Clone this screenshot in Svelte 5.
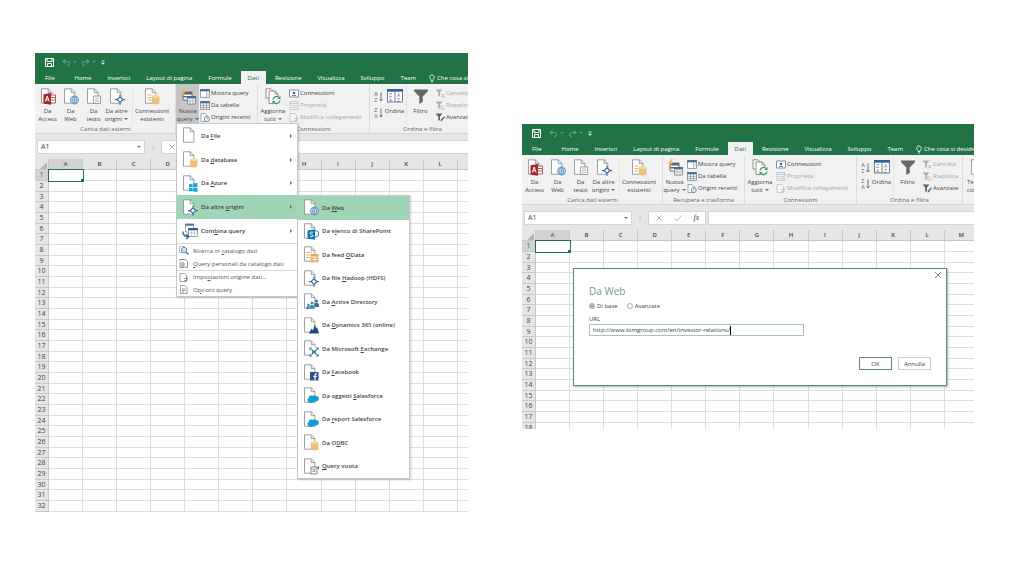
<script>
  const tabs = ['File', 'Home', 'Inserisci', 'Layout di pagina', 'Formule', 'Dati', 'Revisione', 'Visualizza', 'Sviluppo', 'Team'];
  const columns = 'ABCDEFGHIJKLM'.split('');
  const importButtons = [
    { icon: 'access', lines: ['Da', 'Access'] },
    { icon: 'web', lines: ['Da', 'Web'] },
    { icon: 'text', lines: ['Da', 'testo'] },
    { icon: 'diamond', lines: ['Da altre', 'origini'], more: true }
  ];
  // Each label is split as [before, access key, after].
  const queryMenu = [
    { icon: 'page', label: ['Da ', 'F', 'ile'] },
    { icon: 'database', label: ['Da ', 'd', 'atabase'] },
    { icon: 'azure', label: ['Da ', 'A', 'zure'] },
    { icon: 'diamond', label: ['Da altre ', 'o', 'rigini'], active: true },
    { icon: 'combine', label: ['Com', 'b', 'ina query'] }
  ];
  const queryTools = [
    { icon: 'search', label: ['Ricerca in ', 'c', 'atalogo dati'] },
    { icon: 'personal', label: ['', 'Q', 'uery personali da catalogo dati'] },
    { icon: 'settings', label: ['Impo', 's', 'tazioni origine dati...'], divided: true },
    { icon: 'options', label: ['O', 'p', 'zioni query'] }
  ];
  const sourceMenu = [
    { icon: 'web', label: ['Da ', 'W', 'eb'], active: true },
    { icon: 'sharepoint', label: ['Da e', 'l', 'enco di SharePoint'] },
    { icon: 'odata', label: ['Da feed ', 'O', 'Data'] },
    { icon: 'diamond', label: ['Da file ', 'H', 'adoop (HDFS)'] },
    { icon: 'people', label: ['Da ', 'A', 'ctive Directory'] },
    { icon: 'dynamics', label: ['Da ', 'D', 'ynamics 365 (online)'] },
    { icon: 'exchange', label: ['Da Microsoft ', 'E', 'xchange'] },
    { icon: 'facebook', label: ['Da ', 'F', 'acebook'] },
    { icon: 'cloud', label: ['Da oggetti ', 'S', 'alesforce'] },
    { icon: 'cloud', label: ['Da ', 'r', 'eport Salesforce'] },
    { icon: 'database', label: ['Da O', 'D', 'BC'] },
    { icon: 'blank', label: ['', 'Q', 'uery vuota'] }
  ];
  let mode = $state('base');
  let url = $state('http://www.ktmgroup.com/en/investor-relations/');
</script>

{#snippet docIcon(kind)}
  <svg class="doc" viewBox="0 0 16 17" aria-hidden="true">
    {#if kind === 'combine'}
      <path d="M3.5 1h8v8h-8z" fill="#fff" stroke="#8a9299" stroke-width=".8" />
      <path d="M3.2.8h8.6v2H3.2z" fill="#5b7795" />
      <path d="M6.5 5.5h9v8h-9z" fill="#fff" stroke="#7f8a94" stroke-width=".8" />
      <path d="M6.2 5h9.6v2.3H6.2z" fill="#2c5f94" />
      <path d="M6.5 10h9M9.5 7v6.5M12.5 7v6.5" stroke="#a9b3bd" stroke-width=".6" />
      <path d="M1 8.5c0 3.5 1.5 5 5 5M4.2 11l2.6 2.5L4.2 16" fill="none" stroke="#2d6fae" stroke-width="1.5" />
    {:else if kind === 'query'}
      <path d="M3 4h9v8H3z" fill="#fff" stroke="#666" stroke-width=".9" />
      <path d="M3 4h9v2.5H3zM3 8h9v1.5H3z" fill="#666" />
      <path d="M7.5 8.5h8v7.5h-8z" fill="#fff" stroke="#777" stroke-width=".8" />
      <path d="M7.2 8h8.6v2.4H7.2z" fill="#3f6c9b" />
      <path d="M7.5 13h8M10 10v6M13 10v6" stroke="#8b9299" stroke-width=".6" />
      <path d="M4.5 0 1 4.5h2.2L1.5 8 6 3.5H3.8L6 0z" fill="#e9b66a" />
    {:else if kind === 'refresh'}
      <path d="M1 .8h5l2 2V10H1z" fill="#fff" stroke="#777" stroke-width=".8" />
      <path d="M4 3h6l3 3v9.5H4z" fill="#fff" stroke="#777" stroke-width=".8" />
      <path d="M10 3v3h3" fill="none" stroke="#777" stroke-width=".7" />
      <circle cx="11.5" cy="12" r="4.5" fill="#f4f4f4" />
      <path d="M8 11.5a3.6 3.6 0 0 1 6.3-1.8M15 12.5a3.6 3.6 0 0 1-6.3 1.8" fill="none" stroke="#3c9a62" stroke-width="1.3" />
      <path d="M15.5 7.8v3.1h-3.1zM7.5 16.2v-3.1h3.1z" fill="#3c9a62" />
    {:else}
      <path d="M1.5.8h6.8l3.6 3.7v10.7H1.5z" fill="#fff" stroke="#84898d" stroke-width=".8" />
      <path d="M8.2.8v3.8h3.7" fill="none" stroke="#84898d" stroke-width=".8" />
      {#if kind === 'access'}
        <path d="M9.5 7h6v8h-6z" fill="#fff" stroke="#a33a3d" stroke-width=".8" />
        <path d="M10 9.5h5M10 12h5" stroke="#a33a3d" stroke-width=".8" />
        <path d="M3.5 6.2 11 5v11.8l-7.500-1.200z" fill="#a4262c" />
        <path d="m5.300 13.500 1.900-5.500 1.900 5.500M6 11.800h2.500" fill="none" stroke="#fff" stroke-width="1" />
      {:else if kind === 'web'}
        <circle cx="11.500" cy="12" r="4" fill="#e9f2fa" stroke="#4d87b8" stroke-width=".8" />
        <path d="M7.500 12h8M11.500 8v8M8.500 9.800h6M8.500 14.200h6" stroke="#4d87b8" stroke-width=".6" />
        <ellipse cx="11.500" cy="12" rx="2" ry="4" fill="none" stroke="#4d87b8" stroke-width=".6" />
      {:else if kind === 'text'}
        <path d="M7.500 8h7v7.500h-7z" fill="#fff" stroke="#84898d" stroke-width=".8" />
        <path d="M9 10h4M9 11.800h4M9 13.600h4" stroke="#999" stroke-width=".6" />
      {:else if kind === 'diamond'}
        <path d="m11 7.500 4 4-4 4-4-4z" fill="#fff" />
        <path d="m11 8.800 2.800 2.800-2.800 2.800-2.800-2.800z" fill="#fff" stroke="#3b6e9c" stroke-width="1.300" />
        <path d="M11 6.500v2M11 14.700v2M6 11.600h2M14 11.600h2" stroke="#3b6e9c" stroke-width="1.200" />
      {:else if kind === 'database' || kind === 'connections'}
        {#if kind === 'connections'}
          <path d="M3.500 7h4M3.500 9.500h4M3.500 12h4" stroke="#df9a45" stroke-width=".8" />
        {/if}
        <path d="M8 8.500v6.300c0 1 1.700 1.700 3.700 1.700s3.700-.7 3.700-1.700V8.500z" fill="#eec076" />
        <ellipse cx="11.700" cy="8.500" rx="3.700" ry="1.500" fill="#f6d59f" />
      {:else if kind === 'azure'}
        <path d="m7 9.200 3.600-.5v3.600H7zM11.200 8.600l4.300-.6v4.300h-4.300zM7 12.900h3.600v3.500L7 15.900zM11.200 12.900h4.300v4.100l-4.300-.6z" fill="#19a7e0" />
      {:else if kind === 'sharepoint'}
        <circle cx="12.500" cy="11" r="3.200" fill="#fff" stroke="#2b7cb8" stroke-width="1" />
        <path d="m4.500 7.500 7.500-1.300v10.600l-7.500-1.300z" fill="#1173b6" />
        <path d="M10 9.500c-1-.8-3-.5-3 .6 0 1.500 3 1 3 2.500 0 1.200-2 1.400-3.100.6" fill="none" stroke="#fff" stroke-width="1" />
      {:else if kind === 'odata'}
        <path d="M3 6.500h6M3 9h4M3 11.500h4" stroke="#e3a05a" stroke-width=".8" />
        <path d="M7.500 8h8v8.300h-8z" fill="#e9a45f" />
        <path d="M7.500 11h8M8.500 13.500h6M12 11v5" stroke="#fff" stroke-width=".8" />
      {:else if kind === 'people'}
        <circle cx="9" cy="10" r="1.500" fill="#3f8a86" /><circle cx="13.500" cy="8" r="1.600" fill="#35719f" />
        <path d="M11 14v-2.500c0-1 1-1.500 2.500-1.500s2.500.5 2.500 1.500V14z" fill="#35719f" />
        <path d="M6.300 16v-2.500c0-1 1-1.700 2.700-1.700s2.700.7 2.700 1.700V16z" fill="#3f8a86" stroke="#fff" stroke-width=".4" />
        <circle cx="5.500" cy="12" r="1.200" fill="#35719f" /><path d="M3.500 16v-1.500c0-.9.800-1.300 2-1.300l1 2.800z" fill="#35719f" />
      {:else if kind === 'dynamics'}
        <path d="m6 16.500 2.500-5 1.500 2 1.700-6 1.600 4 .7-1.500 2 6.500z" fill="#174a80" />
      {:else if kind === 'exchange'}
        <path d="M6.500 7.500h9v9h-9z" fill="#fff" />
        <path d="M7 10V8h2M13 8h2v2M15 14v2h-2M9 16H7v-2M8.500 9.500l5 5M13.500 9.500l-5 5M9 12h4" fill="none" stroke="#277ca8" stroke-width="1.200" />
      {:else if kind === 'facebook'}
        <path d="M7 8h8.500v8.500H7z" fill="#304f8f" />
        <path d="M14 9.800h-.8q-1.200 0-1.200 1.300v5.400M10.300 12.500h3.500" fill="none" stroke="#fff" stroke-width="1.200" />
      {:else if kind === 'cloud'}
        <path d="M5.500 14.700c-1.500-.8-1.400-3 .2-3.600-.2-2 2-3.200 3.500-2 1-1.300 2.700-1.100 3.300 0 1.800-.5 3.300.8 3.300 2.600s-1.600 3-3.200 2.600c-.8 1.200-2.200 1.400-3 .6-1.200 1.300-3.500 1-4.100-.2z" fill="#119cd8" />
      {:else if kind === 'blank'}
        <path d="M8 9h6v7H8z" fill="#fff" stroke="#777" stroke-width=".9" />
        <path d="M9.500 11.200h3M9.500 13.200h3M15.500 8v3M14 9.500h2" stroke="#666" stroke-width=".9" />
      {/if}
    {/if}
  </svg>
{/snippet}

{#snippet smallIcon(kind, muted = false)}
  <svg class="mini" class:muted viewBox="0 0 10 9" aria-hidden="true">
    {#if kind === 'show' || kind === 'table'}
      <path d="M.5.6h9v7.800h-9z" fill="#fff" stroke="#6d7780" stroke-width=".7" />
      <path d="M.2.200h9.600v2.100H.2z" fill="#3f6c9b" />
      {#if kind === 'table'}
        <path d="M.5 4.300h9M.5 6.300h9M3.500 2v6.500M6.500 2v6.500" stroke="#6d7780" stroke-width=".6" />
      {:else}
        <path d="M6.500 2v6.500M7.300 4h1.500M7.300 6h1.500" stroke="#7a9ab8" stroke-width=".6" />
      {/if}
    {:else if kind === 'recent'}
      <path d="M1 .5h4l2 2v6H1z" fill="#fff" stroke="#7b8085" stroke-width=".7" />
      <circle cx="6.800" cy="6" r="2.500" fill="#fff" stroke="#44759f" stroke-width=".8" />
      <path d="M6.800 4.500V6h1.300" fill="none" stroke="#44759f" stroke-width=".6" />
    {:else if kind === 'connect'}
      <path d="M.5 1h9v7h-9z" fill="#fff" stroke="#6d7780" stroke-width=".8" />
      <circle cx="5" cy="4" r="1.300" fill="#2f6a9d" /><path d="M3 6.500h4" stroke="#2f6a9d" stroke-width=".8" />
    {:else if kind === 'props'}
      <path d="M1 .5h8v8H1zM1 2.500h8M2.500 4.500h1M4.500 4.500H8M2.500 6.500h1M4.500 6.500H8" fill="none" stroke="#777" stroke-width=".7" />
    {:else if kind === 'edit' || kind === 'settings'}
      <path d="M1 .5h4.500l2 2v6H1z" fill="#fff" stroke="#777" stroke-width=".7" />
      <path d="M5 5.500h3.500M5 7.500h3.500M7.500 4.500l1.500 1-1.500 1" fill="none" stroke="#557da0" stroke-width=".7" />
    {:else if kind === 'clear' || kind === 'again' || kind === 'advanced'}
      <path d="M.5.500h7L5 3.500V7L3.200 8V3.500z" fill="#5f6469" />
      {#if kind === 'clear'}
        <path d="m6 5 3.500 3.500M9.500 5 6 8.500" stroke="#777" stroke-width="1" />
      {:else if kind === 'again'}
        <path d="M9.200 6.500a1.800 1.800 0 1 1-1-1.500" fill="none" stroke="#777" stroke-width=".9" />
      {:else}
        <path d="m5.500 8.500.5-2 3.200-3.300.8.800L6.800 8z" fill="#2f6a9d" />
      {/if}
    {:else if kind === 'search'}
      <path d="M.5.500h5v6h-5z" fill="#fff" stroke="#8a9096" stroke-width=".6" />
      <circle cx="5" cy="4" r="2.600" fill="#fff" stroke="#3c6f9e" stroke-width=".9" />
      <path d="m7 6 2.300 2.500" stroke="#3c6f9e" stroke-width="1.200" /><path d="M3.800 4h2.500" stroke="#3c6f9e" stroke-width=".7" />
    {:else if kind === 'personal'}
      <path d="M1 2.500v-2h5.500l2 2v6H6" fill="none" stroke="#777" stroke-width=".8" />
      <path d="M1 4h4v4.500H1zM2.500 5.500v2M3.800 5v2.500" fill="#fff" stroke="#666" stroke-width=".7" />
    {:else if kind === 'options'}
      <path d="M1.500.500h4.500l2 2v6H1.500zM3 4h3.500M3 5.500h3.500M3 7h2" fill="#fff" stroke="#777" stroke-width=".7" />
    {/if}
  </svg>
{/snippet}

{#snippet bigButton(icon, lines, more = false, pressed = false)}
  <button class="big" class:pressed>
    {@render docIcon(icon)}
    <span>{lines[0]}</span>
    <span>{lines[1]}{#if more}<i class="caret"></i>{/if}</span>
  </button>
{/snippet}

{#snippet smallButton(icon, label, off = false)}
  <button class="small" disabled={off}>{@render smallIcon(icon, off)}{label}</button>
{/snippet}

{#snippet excel(rows, menuOpen, overlay)}
  <section class="window" aria-label="Cartella di lavoro">
    <header>
      <div class="quick">
        <button aria-label="Salva">
          <svg viewBox="0 0 9 9"><path d="M.5.500h8v8h-8zM2 .5v3h5v-3M2.500 8.500V5.500h4v3" fill="none" stroke="#fff" /></svg>
        </button>
        <button class="dim" aria-label="Annulla azione">
          <svg viewBox="0 0 9 9"><path d="M3.500 1 1 3.500 3.500 6M1 3.500h4.500a2 2 0 0 1 0 4H5" fill="none" stroke="#fff" /></svg><i class="caret"></i>
        </button>
        <button class="dim" aria-label="Ripeti azione">
          <svg viewBox="0 0 9 9"><path d="M5.500 1 8 3.500 5.500 6M8 3.500H3.500a2 2 0 0 0 0 4H4" fill="none" stroke="#fff" /></svg><i class="caret"></i>
        </button>
        <button aria-label="Personalizza">
          <svg viewBox="0 0 9 9"><path d="M1.500 3h3" stroke="#fff" stroke-width=".8" /><path d="M1.200 4.700h3.600L3 6.700z" fill="#fff" /></svg>
        </button>
      </div>
      <nav>
        {#each tabs as tab}
          <button class="tab" class:current={tab === 'Dati'}>{tab}</button>
        {/each}
        <button class="tab tell">
          <svg viewBox="0 0 6 9" aria-hidden="true"><path d="M2 6.500V5.300a2.300 2.300 0 1 1 2 0v1.200zM2 8h2" fill="none" stroke="#fff" stroke-width=".8" /></svg>Che cosa si desidera fare?
        </button>
      </nav>
    </header>

    <div class="ribbon">
      <div class="group import">
        <div class="tools">
          {#each importButtons as b}
            {@render bigButton(b.icon, b.lines, b.more)}
          {/each}
          <div class="wide">{@render bigButton('connections', ['Connessioni', 'esistenti'])}</div>
        </div>
        <p>Carica dati esterni</p>
      </div>
      <div class="group transform">
        <div class="tools">
          {@render bigButton('query', ['Nuova', 'query'], true, menuOpen)}
          <div class="stack">
            {@render smallButton('show', 'Mostra query')}
            {@render smallButton('table', 'Da tabella')}
            {@render smallButton('recent', 'Origini recenti')}
          </div>
        </div>
        <p>Recupera e trasforma</p>
      </div>
      <div class="group links">
        <div class="tools">
          {@render bigButton('refresh', ['Aggiorna', 'tutti'], true)}
          <div class="stack">
            {@render smallButton('connect', 'Connessioni')}
            {@render smallButton('props', 'Proprietà', true)}
            {@render smallButton('edit', 'Modifica collegamenti', true)}
          </div>
        </div>
        <p>Connessioni</p>
      </div>
      <div class="group sorting">
        <div class="tools">
          <div class="az">
            {#each [['A', 'Z'], ['Z', 'A']] as pair}
              <button aria-label={pair.join(' ')}>
                <svg viewBox="0 0 9 12"><text x="0" y="5" font-size="6" fill="#2f6a9d">{pair[0]}</text><text x="0" y="11" font-size="6" fill="#7d5a96">{pair[1]}</text><path d="M7 1.500v8.500M5.500 8.300 7 10l1.500-1.700" fill="none" stroke="#555" stroke-width=".8" /></svg>
              </button>
            {/each}
          </div>
          <button class="big sort">
            <svg class="doc" viewBox="0 0 16 16" aria-hidden="true"><path d="M.500 1h15v12.500H.500zM8 3v10.500" fill="#fff" stroke="#66727d" stroke-width=".9" /><path d="M0 .500h16v2.700H0z" fill="#2f6395" /><text x="2" y="8" font-size="5" fill="#2f6a9d">Z</text><text x="2" y="13" font-size="5" fill="#7d5a96">A</text><text x="10" y="8" font-size="5" fill="#7d5a96">A</text><text x="10" y="13" font-size="5" fill="#2f6a9d">Z</text></svg>
            <span>Ordina</span>
          </button>
          <button class="big filter">
            <svg class="doc" viewBox="0 0 16 16" aria-hidden="true"><path d="M1 1h14v1.500L9.700 8v5.500L6.300 15.500V8L1 2.500z" fill="#62676b" /></svg>
            <span>Filtro</span>
          </button>
          <div class="stack">
            {@render smallButton('clear', 'Cancella', true)}
            {@render smallButton('again', 'Riapplica', true)}
            {@render smallButton('advanced', 'Avanzate')}
          </div>
        </div>
        <p>Ordina e filtra</p>
      </div>
      <div class="group split">
        <div class="tools">{@render bigButton('text', ['Testo in', 'colonne'])}</div>
      </div>
    </div>

    <div class="formula">
      <div class="name"><span>A1</span><i class="caret"></i></div>
      <span class="grip">⋮</span>
      <div class="actions">
        <svg viewBox="0 0 8 8"><path d="m1.500 1.500 5 5M6.500 1.500l-5 5" stroke="#b5b5b5" /></svg>
        <svg viewBox="0 0 8 8"><path d="M.500 4.500 3 6.800 7.500 1.500" fill="none" stroke="#b5b5b5" /></svg>
        <em>fx</em>
      </div>
      <input class="entry" aria-label="Barra della formula" />
    </div>

    <div class="sheet" class:short={!menuOpen}>
      <table>
        <thead>
          <tr>
            <th class="corner"><svg viewBox="0 0 8 8"><path d="M8 0v8H0z" fill="#b4b4b4" /></svg></th>
            {#each columns as c}<th scope="col" class:picked={c === 'A'}>{c}</th>{/each}
          </tr>
        </thead>
        <tbody>
          {#each Array(rows) as _, r}
            <tr>
              <th scope="row" class:picked={r === 0}>{r + 1}</th>
              {#each columns as c}<td class:cursor={r === 0 && c === 'A'}></td>{/each}
            </tr>
          {/each}
        </tbody>
      </table>
    </div>
    {@render overlay()}
  </section>
{/snippet}

{#snippet keyed(label)}<span>{label[0]}<u>{label[1]}</u>{label[2]}</span>{/snippet}

{#snippet menus()}
  <div class="menu query">
    <div class="large five">
      {#each queryMenu as item}
        <button class:active={item.active}>{@render docIcon(item.icon)}{@render keyed(item.label)}<i class="arrow"></i></button>
      {/each}
    </div>
    <div class="minor">
      {#each queryTools as item}
        <button class:divided={item.divided}>{@render smallIcon(item.icon)}{@render keyed(item.label)}</button>
      {/each}
    </div>
  </div>
  <div class="menu source">
    <div class="large twelve">
      {#each sourceMenu as item}
        <button class:active={item.active}>{@render docIcon(item.icon)}{@render keyed(item.label)}</button>
      {/each}
    </div>
  </div>
{/snippet}

{#snippet dialog()}
  <form class="dialog" aria-label="Da Web" onsubmit={(e) => e.preventDefault()}>
    <button type="button" class="close" aria-label="Chiudi"><svg viewBox="0 0 8 8"><path d="m1 1 6 6M7 1 1 7" stroke="#777" stroke-width=".9" /></svg></button>
    <h2>Da Web</h2>
    <div class="modes">
      <label><input type="radio" name="mode" value="base" bind:group={mode} />Di base</label>
      <label><input type="radio" name="mode" value="advanced" bind:group={mode} />Avanzate</label>
    </div>
    <label class="caption" for="url">URL</label>
    <div class="url">
      <input id="url" size="1" bind:value={url} />
      <i class="beam"></i>
    </div>
    <div class="confirm">
      <button class="ok">OK</button>
      <button type="button">Annulla</button>
    </div>
  </form>
{/snippet}

<main>
  {@render excel(32, true, menus)}
  <div class="second">{@render excel(18, false, dialog)}</div>
</main>

<style>
  :global(body) { background: #fff; }
  main {
    display: grid;
    grid-template-columns: 433fr 452fr;
    gap: 54px;
    align-items: start;
    padding: 53px 50px 0 35px;
    font: 6px/8px "Open Sans", "Noto Sans", sans-serif;
    color: #444;
  }
  .second { margin-top: 71px; min-width: 0; }
  .window { position: relative; overflow: hidden; min-width: 0; background: #e6e6e6; }
  button, input { font: inherit; color: inherit; margin: 0; padding: 0; border: 0; background: none; box-sizing: border-box; }
  svg { display: block; flex: none; }
  p, h2 { margin: 0; font-weight: 400; }

  header { background: #217346; color: #fff; }
  .quick { display: flex; align-items: center; gap: 4px; height: 18px; padding-left: 10px; }
  .quick button { display: flex; align-items: center; gap: 2px; }
  .quick button:first-child { margin-right: 4px; }
  .quick svg { width: 9px; height: 9px; }
  .dim { opacity: .35; }
  .caret { display: inline-block; flex: none; width: 0; height: 0; border: 2px solid transparent; border-top-color: currentColor; border-bottom: 0; opacity: .75; }
  nav { display: flex; height: 13px; padding-left: 3px; white-space: nowrap; }
  .tab { flex: none; padding: 1px 7px 0; margin-right: 2px; }
  .tab:first-child { margin-right: 6px; }
  .tab.current { background: #f1f1f1; color: #217346; }
  .tell { display: flex; align-items: center; gap: 2px; padding-left: 4px; }
  .tell svg { width: 6px; height: 9px; }

  .ribbon { display: flex; height: 50px; background: #f1f1f1; border-bottom: 1px solid #d5d5d5; white-space: nowrap; overflow: hidden; box-sizing: border-box; }
  .group { flex: none; display: flex; flex-direction: column; border-right: 1px solid #dcdcdc; box-sizing: border-box; padding-top: 3px; }
  .group p { text-align: center; color: #666; }
  .import { width: 141px; padding-left: 1px; }
  .transform { width: 82px; }
  .links { width: 112px; }
  .sorting { width: 106px; }
  .split { width: 40px; }
  .tools { display: flex; height: 38px; }
  .big { display: flex; flex-direction: column; align-items: center; flex: none; width: 23px; margin-top: -3px; padding-top: 4px; }
  .big .caret { margin-left: 2px; vertical-align: 1px; }
  .pressed { background: #c5c5c5; }
  .doc { width: 16px; height: 17px; margin-bottom: 2px; }
  .wide { display: flex; margin-left: 4px; border-left: 1px solid #e4e4e4; }
  .wide .big { width: 38px; }
  .links .big { width: 30px; }
  .split .big { width: 30px; }
  .stack { display: grid; grid-template-rows: repeat(3, 12px); padding-left: 1px; }
  .small { display: flex; align-items: center; gap: 1px; }
  .small:disabled { color: #a8a8a8; }
  .mini { width: 10px; height: 9px; }
  .muted { opacity: .45; }
  .az { display: grid; gap: 4px; align-content: start; padding: 4px 0 0 4px; }
  .az svg { width: 9px; height: 12px; }
  .sort { width: 23px; }
  .filter { width: 28px; border-left: 1px solid #e4e4e4; }

  .formula { display: flex; align-items: stretch; height: 14px; margin: 6px 0 5px 2px; }
  .formula > * { box-sizing: border-box; }
  .name { display: flex; align-items: center; justify-content: space-between; flex: none; width: 108px; padding: 0 3px; background: #fff; border: 1px solid #d4d4d4; }
  .name span { font-size: 7px; }
  .grip { width: 16px; text-align: center; line-height: 14px; color: #999; }
  .actions { display: flex; align-items: center; justify-content: space-around; flex: none; width: 58px; background: #fff; border: 1px solid #d4d4d4; }
  .actions svg { width: 8px; height: 8px; }
  .actions em { font: italic 8px/10px "Liberation Serif", serif; }
  .entry { flex: 1; min-width: 0; margin-left: 2px; background: #fff; border: 1px solid #d4d4d4; border-right: 0; }

  .sheet { overflow: hidden; background: #fff; }
  .sheet.short { height: 199px; }
  table { table-layout: fixed; width: 457px; border-collapse: separate; border-spacing: 0; }
  th, td { box-sizing: border-box; height: 11px; padding: 0; border: solid #dedede; border-width: 0 1px 1px 0; line-height: 8px; overflow: hidden; }
  tbody tr:nth-child(3n) > * { height: 10px; }
  th { background: #e6e6e6; border-color: #c8c8c8; font-weight: 400; color: #444; }
  thead th { font-weight: 600; }
  tbody th { font-size: 7px; }
  .corner { width: 14px; }
  .corner svg { width: 7px; height: 7px; margin: 2px 0 0 5px; }
  .picked { background: #d2d2d2; color: #217346; }
  thead .picked { border-bottom-color: #217346; }
  .cursor { border: 0; outline: 1px solid #217346; background: linear-gradient(#217346, #217346) right bottom / 2px 2px no-repeat; }

  .menu { position: absolute; background: #fff; border: 1px solid #c6c6c6; box-shadow: 1px 1px 2px #0003; box-sizing: border-box; white-space: nowrap; }
  .menu.query { left: 141px; top: 70px; width: 122px; }
  .menu.source { left: 262px; top: 142px; width: 113px; }
  .menu button { display: flex; align-items: center; width: 100%; text-align: left; }
  .large { display: grid; font-weight: 600; }
  .five { height: 119px; grid-template-rows: repeat(5, 1fr); }
  .twelve { height: 282px; grid-template-rows: repeat(12, 1fr); }
  .large button { gap: 3px; padding: 0 5px; }
  .large .doc { margin: 0; }
  .active { background: #9fd5b7; }
  .arrow { margin-left: auto; border: 2px solid transparent; border-left-color: #666; border-right: 0; }
  .minor { border-top: 1px solid #d8d8d8; }
  .minor button { height: 13px; gap: 4px; padding-left: 2px; color: #555; }
  .minor .divided { border-top: 1px solid #d8d8d8; }
  .menu .active { background: #9fd5b7; }
  u { text-decoration-thickness: 1px; text-underline-offset: 1px; }

  .dialog { position: absolute; left: 51px; right: 27px; top: 144px; height: 118px; padding: 15px; background: #fff; border: 1px solid #5c8a70; box-shadow: 1px 1px 2px #21734680; box-sizing: border-box; }
  .close { position: absolute; right: 4px; top: 2px; }
  .close svg { width: 8px; height: 8px; }
  .dialog h2 { font-size: 10px; line-height: 14px; color: #6a9c7e; }
  .modes { display: flex; gap: 9px; margin-top: 4px; }
  .modes label { display: flex; align-items: center; gap: 2px; }
  .modes input { appearance: none; width: 6px; height: 6px; border: 1px solid #aaa; border-radius: 50%; }
  .modes input:checked { background: #555; box-shadow: inset 0 0 0 1px #fff; }
  .caption { display: block; margin-top: 5px; }
  .url { position: relative; display: flex; align-items: center; width: 215px; height: 12px; margin-top: 1px; padding-left: 3px; border: 1px solid #a9c4b6; box-sizing: border-box; }
  .url input { field-sizing: content; width: auto; height: 10px; outline: 0; }
  .beam { width: 1px; height: 9px; background: #000; }
  .confirm { position: absolute; right: 15px; bottom: 15px; display: flex; gap: 6px; }
  .confirm button { width: 33px; height: 13px; border: 1px solid #ccc; }
  .confirm .ok { border-color: #5c8a70; }
</style>
